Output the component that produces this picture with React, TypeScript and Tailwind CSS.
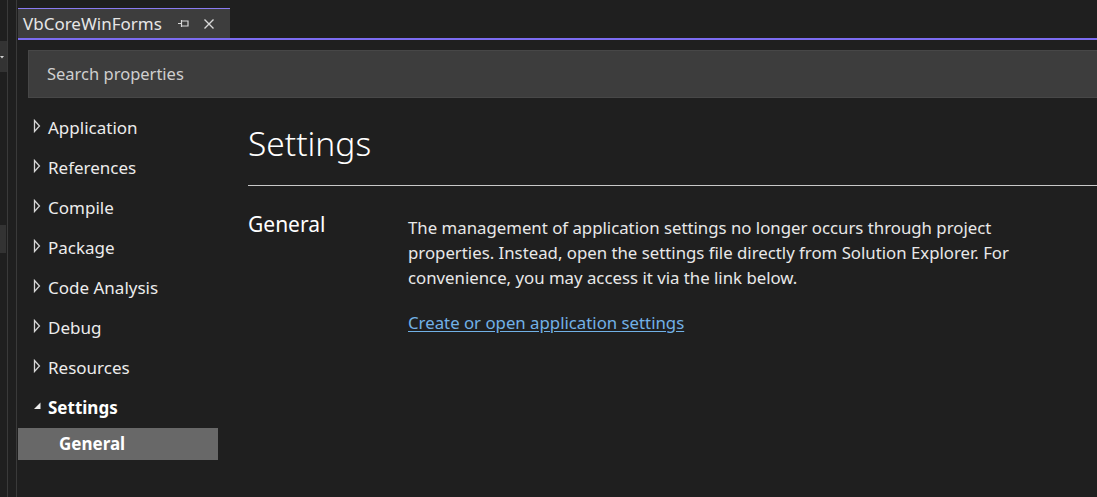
import React from 'react';

const font = { fontFamily: '"Noto Sans", "Open Sans", sans-serif' };

function Collapsed() {
  return (
    <svg width="8" height="14" viewBox="0 0 8 14" className="shrink-0 -translate-y-[2px]">
      <path d="M1.5 1.5 L6.5 7 L1.5 12.5 Z" fill="none" stroke="#d6d6d6" strokeWidth="1.3" />
    </svg>
  );
}

function Expanded() {
  return (
    <svg width="8" height="14" viewBox="0 0 8 14" className="shrink-0 -translate-y-[2px]">
      <path d="M7.5 3.5 L7.5 10 L1 10 Z" fill="#ececec" />
    </svg>
  );
}

const items = ['Application', 'References', 'Compile', 'Package', 'Code Analysis', 'Debug', 'Resources'];

export default function App() {
  return (
    <div className="flex h-[497px] w-[1097px] overflow-hidden bg-[#1f1f1f] text-[#f0f0f0]" style={font}>
      {/* left strip of the neighbouring tool window */}
      <div className="flex w-[18px] shrink-0">
        <div className="flex w-[8px] flex-col border-r border-[#3a3a3a]">
          <div className="mt-[41px] flex h-[31px] items-center bg-[#333333]">
            <svg width="4" height="4" viewBox="0 0 4 4">
              <path d="M0 1 L4 1 L2 3.5 Z" fill="#d0d0d0" />
            </svg>
          </div>
          <div className="mt-[153px] h-[28px] w-[6px] bg-[#333333]" />
        </div>
        <div className="w-[9px] border-r border-[#3a3a3a]" />
      </div>

      <div className="flex min-w-0 flex-1 flex-col">
        {/* tab row */}
        <div className="flex h-[38px] items-end">
          <div className="flex h-[30px] w-[212px] items-center border-t border-[#8a7bf0] bg-[#3d3d3d] pl-[5px] text-[17px] text-[#e6e6e6]">
            <span className="leading-none">VbCoreWinForms</span>
            <svg width="13" height="11" viewBox="0 0 13 11" className="ml-[15px]">
              <path d="M1 5.5 H4.5 M4.5 2 V9 M4.5 3 H11 V8 H4.5" fill="none" stroke="#d8d8d8" strokeWidth="1.2" />
            </svg>
            <svg width="12" height="12" viewBox="0 0 12 12" className="ml-[13px]">
              <path d="M1.5 1.5 L10.5 10.5 M10.5 1.5 L1.5 10.5" stroke="#d8d8d8" strokeWidth="1.4" />
            </svg>
          </div>
        </div>
        <div className="h-[2px] bg-[#7c6cf0]" />

        {/* search */}
        <div className="ml-[10px] mt-[10px] flex h-[48px] items-center border border-[#474747] border-r-0 bg-[#3d3d3d] pl-[18px] text-[16.5px] text-[#cfcfcf]">
          Search properties
        </div>

        <div className="flex flex-1">
          {/* nav */}
          <div className="flex w-[200px] shrink-0 flex-col pt-[10px]">
            {items.map((label) => (
              <div key={label} className="flex h-[40px] items-center gap-[7px] pl-[15px] text-[17px] text-[#ececec]">
                <Collapsed />
                <span>{label}</span>
              </div>
            ))}
            <div className="flex h-[40px] items-center gap-[7px] pl-[15px] text-[17px] font-bold text-white">
              <Expanded />
              <span>Settings</span>
            </div>
            <div className="flex h-[32px] items-center bg-[#686868] pl-[41px] text-[17px] font-bold text-white">
              General
            </div>
          </div>

          {/* content */}
          <div className="flex flex-1 flex-col pl-[30px]">
            <div className="pt-[20px] text-[33.5px] font-light leading-[50px] text-white">Settings</div>
            <div className="mt-[17px] h-px bg-[#c8c8c8]" />
            <div className="mt-[24px] flex">
              <div className="w-[160px] shrink-0 text-[21px] leading-[28px] text-white">General</div>
              <div className="flex w-[640px] flex-col pt-[5px]">
                <p className="text-[16.8px] leading-[25px] text-[#e8e8e8]">
                  The management of application settings no longer occurs through project properties. Instead, open the settings file directly from Solution Explorer. For convenience, you may access it via the link below.
                </p>
                <a className="mt-[20px] text-[16.8px] leading-[25px] text-[#72b1e6] underline underline-offset-2">
                  Create or open application settings
                </a>
              </div>
            </div>
          </div>
        </div>
      </div>
    </div>
  );
}
